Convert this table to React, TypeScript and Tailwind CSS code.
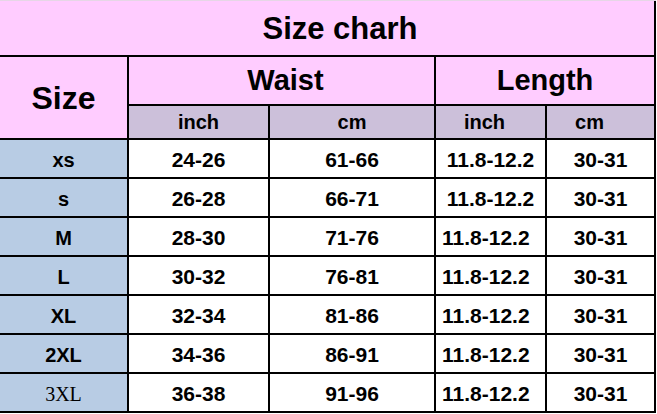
const rows = [
  { size: 'xs', wIn: '24-26', wCm: '61-66', lIn: '11.8-12.2', lCm: '30-31', center: true },
  { size: 's', wIn: '26-28', wCm: '66-71', lIn: '11.8-12.2', lCm: '30-31', center: true },
  { size: 'M', wIn: '28-30', wCm: '71-76', lIn: '11.8-12.2', lCm: '30-31' },
  { size: 'L', wIn: '30-32', wCm: '76-81', lIn: '11.8-12.2', lCm: '30-31' },
  { size: 'XL', wIn: '32-34', wCm: '81-86', lIn: '11.8-12.2', lCm: '30-31' },
  { size: '2XL', wIn: '34-36', wCm: '86-91', lIn: '11.8-12.2', lCm: '30-31' },
  { size: '3XL', wIn: '36-38', wCm: '91-96', lIn: '11.8-12.2', lCm: '30-31', serif: true },
];

const cell = 'flex items-center justify-center pt-[2px] bg-white text-[21px] font-bold text-black';

export default function App() {
  return (
    <div className="w-[657px] h-[414px] overflow-hidden bg-white font-['Liberation_Sans',Arial,sans-serif]">
      <div className="border-t border-[#e6d6e6] w-[656px]">
        <div className="grid grid-cols-[127px_139px_164px_109px_107px] grid-rows-[54px_47px_32px_repeat(7,37px)] gap-[2px] bg-black pr-[2px] pb-[2px]">
          {/* Title */}
          <div className="col-span-5 flex items-center justify-center pl-[26px] pt-[2px] bg-[#ffccff] text-[31px] font-bold text-black">
            Size charh
          </div>

          {/* Size header */}
          <div className="row-span-2 flex items-center justify-center bg-[#ffccff] text-[32px] font-bold text-black">
            Size
          </div>
          <div className="col-span-2 flex items-center justify-center pl-[8px] bg-[#ffccff] text-[29px] font-bold text-black">
            Waist
          </div>
          <div className="col-span-2 flex items-center justify-center bg-[#ffccff] text-[29px] font-bold text-black">
            Length
          </div>

          {/* Units */}
          <div className="flex items-center justify-center bg-[#ccc0da] text-[20px] font-bold text-black">inch</div>
          <div className="flex items-center justify-center bg-[#ccc0da] text-[20px] font-bold text-black">cm</div>
          <div className="flex items-center justify-center pr-[12px] bg-[#ccc0da] text-[20px] font-bold text-black">inch</div>
          <div className="flex items-center justify-center pr-[22px] bg-[#ccc0da] text-[20px] font-bold text-black">cm</div>

          {rows.map((r) => (
            <div key={r.size} className="contents">
              <div
                className={
                  r.serif
                    ? "flex items-center justify-center pt-[2px] bg-[#b8cce4] text-[20px] text-black font-['Liberation_Serif','Times_New_Roman',serif]"
                    : 'flex items-center justify-center pt-[2px] bg-[#b8cce4] text-[20px] font-bold text-black'
                }
              >
                {r.size}
              </div>
              <div className={cell}>{r.wIn}</div>
              <div className={cell}>{r.wCm}</div>
              <div
                className={
                  r.center
                    ? cell
                    : 'flex items-center justify-start pl-[6px] pt-[2px] bg-white text-[21px] font-bold text-black'
                }
              >
                {r.lIn}
              </div>
              <div className={cell}>{r.lCm}</div>
            </div>
          ))}
        </div>
      </div>
    </div>
  );
}
